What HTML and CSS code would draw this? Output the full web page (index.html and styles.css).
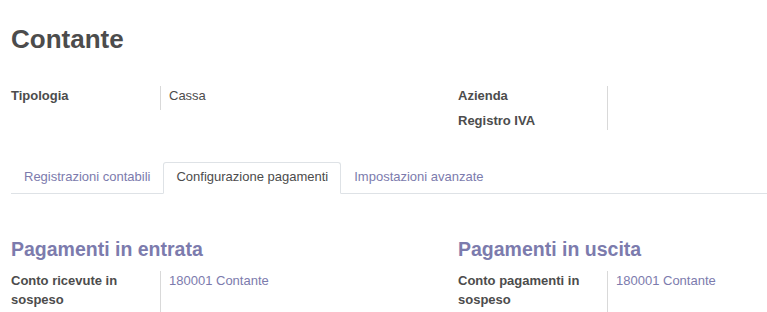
FILE: index.html
```html
<!DOCTYPE html>
<html lang="it">
  <head>
    <meta charset="UTF-8" />
    <meta name="viewport" content="width=device-width, initial-scale=1.0" />
    <title>Contante</title>
    <link rel="stylesheet" href="styles.css">
  </head>
  <body>
    <div class="sheet">
      <h1 class="title">Contante</h1>

      <div class="group">
        <div class="fields">
          <div class="field">
            <div class="field-label">Tipologia</div>
            <div class="field-value select">Cassa</div>
          </div>
        </div>
        <div class="fields">
          <div class="field">
            <div class="field-label">Azienda</div>
            <div class="field-value"></div>
          </div>
          <div class="field">
            <div class="field-label">Registro IVA</div>
            <div class="field-value"></div>
          </div>
        </div>
      </div>

      <ul class="tabs">
        <li class="tab">Registrazioni contabili</li>
        <li class="tab active">Configurazione pagamenti</li>
        <li class="tab">Impostazioni avanzate</li>
      </ul>

      <div class="group">
        <div class="fields">
          <h2 class="separator">Pagamenti in entrata</h2>
          <div class="field open">
            <div class="field-label">Conto ricevute in sospeso</div>
            <div class="field-value link">180001 Contante</div>
          </div>
        </div>
        <div class="fields">
          <h2 class="separator">Pagamenti in uscita</h2>
          <div class="field open">
            <div class="field-label">Conto pagamenti in sospeso</div>
            <div class="field-value link">180001 Contante</div>
          </div>
        </div>
      </div>
    </div>
  </body>
</html>
```

FILE: styles.css
```css
body {
  margin: 0;
  font-family: "Liberation Sans", Arial, sans-serif;
  font-size: 13px;
  line-height: 1.5;
  color: #4c4c4c;
  background: white;
  overflow: hidden;
}
.sheet {
  padding: 24px 0 0 11px;
}
.title {
  margin: 0;
  font-size: 26px;
  line-height: 1.2;
  font-weight: bold;
  color: #4c4c4c;
}
.group {
  display: grid;
  grid-template-columns: 447px 1fr;
  margin-top: 31px;
}
.field {
  display: flex;
}
.field > * {
  padding-bottom: 5px;
}
.field:last-child > * {
  padding-bottom: 0;
}
.field.open > * {
  padding-bottom: 6px;
}
.field-label {
  flex: none;
  width: 149px;
  padding-right: 8px;
  box-sizing: border-box;
  font-weight: bold;
}
.field-value {
  flex: 1;
  border-left: 1px solid #d9d9d9;
  padding-left: 8px;
}
.select {
  min-height: 24px;
  box-sizing: border-box;
}
.link {
  color: #7c7bad;
}
.tabs {
  display: flex;
  list-style: none;
  margin: 31.5px 0 0;
  padding: 0;
  border-bottom: 1px solid #dee2e6;
}
.tab {
  padding: 4.5px 12px 6.5px;
  border: 1px solid transparent;
  border-radius: 3px 3px 0 0;
  margin-bottom: -1px;
  color: #7c7bad;
}
.tab.active {
  color: #4c4c4c;
  background: white;
  border-color: #dee2e6 #dee2e6 white;
}
.tabs + .group {
  margin-top: 43.5px;
}
.separator {
  margin: 0 0 10.5px;
  font-size: 19.5px;
  line-height: 1.15;
  font-weight: bold;
  color: #7c7bad;
}
```
